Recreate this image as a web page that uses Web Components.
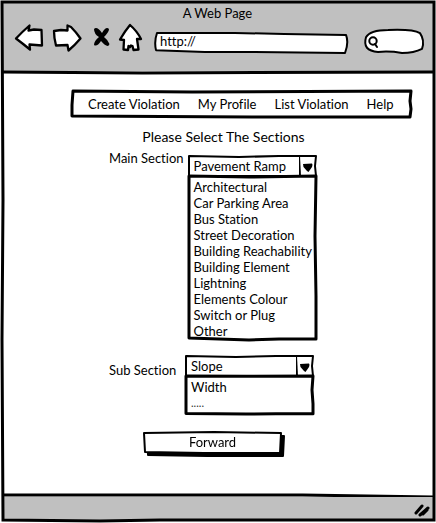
<!DOCTYPE html>
<html lang="en">
<head>
<meta charset="utf-8">
<title>A Web Page</title>
<style>
  html, body { margin: 0; }
  body { font: 13px/16px Lato, "Open Sans", sans-serif; font-variant-ligatures: none; color: #000; background: #fff; }
</style>
</head>
<body>
<browser-window heading="A Web Page" address="http://">
  <violation-page></violation-page>
</browser-window>

<script>
const define = (name, html, setup) => {
  const template = document.createElement('template');
  template.innerHTML = html;
  customElements.define(name, class extends HTMLElement {
    constructor() {
      super();
      this.attachShadow({ mode: 'open' }).append(template.content.cloneNode(true));
    }
    connectedCallback() { if (setup) setup(this, this.shadowRoot); }
  });
};

/* A box with a hand-drawn outline that stretches with its content. */
define('sketch-box', `
  <style>
    :host { display: block; position: relative; }
    svg { position: absolute; inset: 0; width: 100%; height: 100%; overflow: visible; pointer-events: none; }
    path { fill: var(--fill, #fff); stroke: #000; stroke-width: var(--stroke, 3px); stroke-linejoin: round; stroke-linecap: round; vector-effect: non-scaling-stroke; }
    .content { position: relative; }
  </style>
  <svg preserveAspectRatio="none" aria-hidden="true"><path/></svg>
  <div class="content"><slot></slot></div>`,
  (host, root) => {
    root.querySelector('svg').setAttribute('viewBox', host.getAttribute('view'));
    root.querySelector('path').setAttribute('d', host.getAttribute('outline'));
  });

define('tool-bar', `
  <style>
    :host { display: flex; align-items: center; padding: 0 10px 0 13px; }
    button { all: unset; display: block; cursor: pointer; flex: none; }
    svg { display: block; overflow: visible; }
    .line { fill: #fff; stroke: #000; stroke-width: 2.3; stroke-linejoin: round; stroke-linecap: round; }
    .forward { margin-left: 10px; }
    .stop { margin-left: 12px; }
    .home { margin-left: 9px; }
    .address { flex: 1; margin-left: 13px; margin-top: 9px; --stroke: 2px; }
    .search { flex: none; width: 58px; margin-left: 17px; margin-top: 7px; --stroke: 2px; }
    input { all: unset; display: block; box-sizing: border-box; width: 100%; height: 20px; padding: 0 5px 3px; font: inherit; }
    .search label { display: flex; align-items: center; height: 25px; padding-left: 3px; }
    .search svg { flex: none; }
    .search input { min-width: 0; }
  </style>
  <button class="back" aria-label="Back"><svg width="28" height="28"><path class="line" d="M1 14.500Q7 8 14.500 1.500L13.500 6.500 19 5.500 26.500 6 27 21.500 14.500 20.500 15 25.500Q7 19 1 14.500Z"/></svg></button>
  <button class="forward" aria-label="Forward"><svg width="28" height="28"><path class="line" d="M1 7 8 6 14.500 6.500 14.500 1.500 18 3Q23 8 27.500 14.500Q22 21 15.500 26.500L14.500 21 3 21.500Q1 14 1 7Z"/></svg></button>
  <button class="stop" aria-label="Stop"><svg width="17" height="22"><path d="M1 2Q4 -1 9 6Q13 -1 16 2Q16 5 11 10Q15 13 16.500 17Q15 22 8 14Q4 20 1 18Q1 14 6 10Q1 7 1 2Z"/></svg></button>
  <button class="home" aria-label="Home"><svg width="23" height="28"><path class="line" d="M11 1Q18 7 22 15L18 15 19.500 25.500 14.500 26 13.500 22 12 21.500 11 23 9.500 22 9 26 4.500 25.500 5 16 1 15.500Q6 7 11 1Z"/></svg></button>
  <sketch-box class="address" view="0 0 194 21" outline="M2 0 L40 0 L80 0 L130 1 L192 2 Q195 10 191 21 L100 20 L50 20 L1 18 Q-1 9 2 0Z">
    <input aria-label="Address">
  </sketch-box>
  <sketch-box class="search" view="0 0 58 24" outline="M1 8 Q5 1 23 1 Q48 0 55 4 Q60 11 57 19 Q49 23 37 23 Q25 21 13 22 Q-3 21 1 8Z">
    <label><svg width="11" height="12"><circle cx="5" cy="5" r="3.700" fill="none" stroke="#000" stroke-width="2"/><path d="M7 8 9 11" stroke="#000" stroke-width="2" stroke-linecap="round"/></svg><input type="search" aria-label="Search"></label>
  </sketch-box>`,
  (host, root) => {
    root.querySelector('.address input').value = host.getRootNode().host.getAttribute('address');
  });

define('browser-window', `
  <style>
    :host { display: flex; flex-direction: column; box-sizing: border-box; min-height: 100vh; padding: 2px 3px 3px 2px; position: relative; }
    header { background: #c0c0c0; padding: 3px 0 17px; }
    .title { text-align: center; line-height: 17px; }
    main { flex: 1; }
    .rule { display: block; width: 100%; height: 3px; overflow: visible; }
    .rule path, .frame path { fill: none; stroke: #000; stroke-width: 3px; vector-effect: non-scaling-stroke; }
    footer { display: flex; justify-content: flex-end; align-items: flex-start; background: #c0c0c0; height: 23px; }
    footer svg.grip { margin: 7px 3px 0 0; }
    .frame { position: absolute; inset: 0; width: 100%; height: 100%; pointer-events: none; }
  </style>
  <header>
    <div class="title"></div>
    <tool-bar></tool-bar>
  </header>
  <svg class="rule" viewBox="0 0 430 3" preserveAspectRatio="none" aria-hidden="true"><path d="M0 1 L140 2 L430 1"/></svg>
  <main><slot></slot></main>
  <svg class="rule" viewBox="0 0 430 3" preserveAspectRatio="none" aria-hidden="true"><path d="M0 1 L180 1 L300 1 L430 3"/></svg>
  <footer>
    <svg class="grip" width="16" height="14" aria-hidden="true"><path d="M2 9 8 2M6 11 14 4M9 10 13 6" fill="none" stroke="#000" stroke-width="3" stroke-linecap="round"/></svg>
  </footer>
  <svg class="frame" viewBox="0 0 436 523" preserveAspectRatio="none" aria-hidden="true"><path d="M2 2 L150 2 L434 2 L434 160 L434 300 L434 520 L160 520 L100 521 L3 520 L2 340 L3 200Z"/></svg>`,
  (host, root) => { root.querySelector('.title').textContent = host.getAttribute('heading'); });

define('menu-bar', `
  <style>
    :host { display: block; }
    nav { display: flex; gap: 18px; padding: 5px 16px; }
    ::slotted(a) { color: inherit; text-decoration: none; white-space: nowrap; }
  </style>
  <sketch-box view="0 0 340 26" outline="M1 0 L120 1 L339 0 L338 10 L339 18 L338 26 L180 26 L0 25 L0 14Z">
    <nav><slot></slot></nav>
  </sketch-box>`);

/* A labelled drop-down shown with its list open; choosing a row updates the value. */
define('open-select', `
  <style>
    :host { display: flex; align-items: flex-start; gap: 5px; }
    label { min-width: 72px; white-space: nowrap; margin-top: var(--label-top, 0); }
    .control { flex: none; width: 127px; margin-top: var(--control-top, 0); }
    .head { --stroke: 2px; }
    .value { display: flex; align-items: center; height: 20px; }
    select { all: unset; flex: 1; min-width: 0; height: 20px; padding-left: 5px; line-height: 20px; white-space: nowrap; cursor: pointer; }
    .arrow { flex: none; }
    ul { list-style: none; margin: 0; padding: 3px 0 1px 5px; }
    li { white-space: nowrap; cursor: default; }
    li.faint { color: #333; font-size: 11px; padding-bottom: 2px; }
    .list { --stroke: 3px; }
  </style>
  <label for="pick"></label>
  <div class="control">
    <sketch-box class="head" view="0 0 127 20" outline="M0 0 L50 1 L90 0 L127 0 L126 10 L127 20 L0 20Z">
      <div class="value">
        <select id="pick"></select>
        <svg class="arrow" width="17" height="20" aria-hidden="true"><path d="M0 0 1 20" stroke="#000" stroke-width="2"/><path d="M4 8 13 7.500Q14 8 13 11L9.500 16 8 15 4.500 11Z"/></svg>
      </div>
    </sketch-box>
    <sketch-box class="list" view="0 0 127 164" outline="M0 0 L60 1 L127 0 L126 60 L127 120 L127 163 L90 163 L60 164 L30 163 L0 162 L0 80Z">
      <ul role="listbox"></ul>
    </sketch-box>
  </div>`,
  (host, root) => {
    const select = root.querySelector('select');
    const list = root.querySelector('ul');
    const label = host.getAttribute('label');
    root.querySelector('label').textContent = label;
    list.setAttribute('aria-label', label);
    select.add(new Option(host.getAttribute('value')));
    for (const text of host.getAttribute('choices').split('|')) {
      select.add(new Option(text));
      const row = document.createElement('li');
      row.setAttribute('role', 'option');
      row.textContent = text;
      row.classList.toggle('faint', /^\.+$/.test(text));
      row.addEventListener('click', () => { select.value = text; });
      list.append(row);
    }
  });

define('violation-page', `
  <style>
    :host { display: block; padding: 17px 21px 32px 70px; }
    section { padding: 12px 74px 0 37px; }
    h1 { margin: 0 0 5px; font: inherit; font-size: 14px; text-align: center; white-space: nowrap; }
    .main { --control-top: 6px; }
    .sub { margin-top: 16px; --label-top: 6px; }
    .send { width: 137px; margin: 18px 0 0 35px; --stroke: 2px; filter: drop-shadow(3px 3px 0 #000); }
    button { all: unset; display: block; width: 100%; height: 21px; line-height: 21px; text-align: center; cursor: pointer; }
  </style>
  <menu-bar>
    <a href="#create">Create Violation</a>
    <a href="#profile">My Profile</a>
    <a href="#list">List Violation</a>
    <a href="#help">Help</a>
  </menu-bar>
  <section>
    <h1>Please Select The Sections</h1>
    <open-select class="main" label="Main Section" value="Pavement Ramp"
      choices="Architectural|Car Parking Area|Bus Station|Street Decoration|Building Reachability|Building Element|Lightning|Elements Colour|Switch or Plug|Other"></open-select>
    <open-select class="sub" label="Sub Section" value="Slope" choices="Width|....."></open-select>
    <sketch-box class="send" view="0 0 137 21" outline="M0 1 L70 0 L137 1 L136 21 L60 21 L1 20Z">
      <button type="button">Forward</button>
    </sketch-box>
  </section>`);
</script>
</body>
</html>
